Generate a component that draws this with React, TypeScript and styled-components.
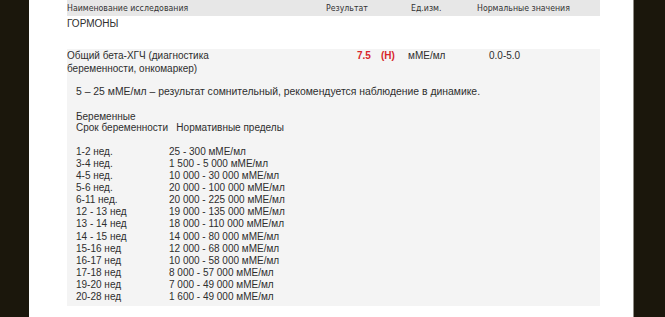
import React from "react";
import styled, { createGlobalStyle } from "styled-components";

const Global = createGlobalStyle`
  html, body { margin: 0; padding: 0; background: #1b170c; }
  #root { width: 665px; height: 317px; overflow: hidden; }
`;

const Frame = styled.div`
  display: flex;
  height: 317px;
  background: #1b170c;
`;

const SideBar = styled.div<{ $w: number }>`
  width: ${(p) => p.$w}px;
  flex: none;
  background: #1b170c;
`;

const Sheet = styled.div`
  width: 605px;
  flex: none;
  background: #ffffff;
  border-right: 1px solid #8f8c86;
  padding: 0 33px 0 38px;
  box-sizing: border-box;
  font-family: "Liberation Sans", Arial, sans-serif;
  color: #2e2e2e;
  font-size: 10px;
`;

const Cols = styled.div`
  display: grid;
  grid-template-columns: 259px 85px 66px 1fr;
  align-items: start;
`;

const HeaderRow = styled(Cols)`
  height: 16px;
  background: #e7e7e7;
  font-size: 8.7px;
  line-height: 16px;
  color: #333;
  font-family: "DejaVu Sans Condensed", "DejaVu Sans", sans-serif;
`;

const Section = styled.div`
  height: 33px;
  line-height: 13px;
  font-size: 10px;
  padding-top: 1px;
  box-sizing: border-box;
`;

const Panel = styled.div`
  background: #f4f4f4;
  height: 257px;
  padding-top: 1px;
  box-sizing: border-box;
`;

const TestRow = styled(Cols)`
  line-height: 12.5px;
`;

const Result = styled.div`
  color: #d8262b;
  font-weight: bold;
  padding-left: 31px;
  display: flex;
  gap: 10px;
`;

const Unit = styled.div`
  margin-left: -3px;
`;

const Norm = styled.div`
  padding-left: 12px;
`;

const Note = styled.div`
  padding-left: 9px;
  line-height: 11.5px;
  margin-top: 11px;
`;

const Remark = styled.div`
  font-size: 10.4px;
`;

const Para = styled.div<{ $gap: number }>`
  margin-top: ${(p) => p.$gap}px;
`;

const Table = styled.div`
  display: grid;
  grid-template-columns: 93px 1fr;
  margin-top: 12px;
`;

const Cell = styled.div`
  height: 12.17px;
`;

const rows: [string, string][] = [
  ["1-2 нед.", "25 - 300 мМЕ/мл"],
  ["3-4 нед.", "1 500 - 5 000 мМЕ/мл"],
  ["4-5 нед.", "10 000 - 30 000 мМЕ/мл"],
  ["5-6 нед.", "20 000 - 100 000 мМЕ/мл"],
  ["6-11 нед.", "20 000 - 225 000 мМЕ/мл"],
  ["12 - 13 нед", "19 000 - 135 000 мМЕ/мл"],
  ["13 - 14 нед", "18 000 - 110 000 мМЕ/мл"],
  ["14 - 15 нед", "14 000 - 80 000 мМЕ/мл"],
  ["15-16 нед", "12 000 - 68 000 мМЕ/мл"],
  ["16-17 нед", "10 000 - 58 000 мМЕ/мл"],
  ["17-18 нед", "8 000 - 57 000 мМЕ/мл"],
  ["19-20 нед", "7 000 - 49 000 мМЕ/мл"],
  ["20-28 нед", "1 600 - 49 000 мМЕ/мл"],
];

export default function App() {
  return (
    <>
      <Global />
      <Frame>
        <SideBar $w={29} />
        <Sheet>
          <HeaderRow>
            <div>Наименование исследования</div>
            <div>Результат</div>
            <div>Ед.изм.</div>
            <div>Нормальные значения</div>
          </HeaderRow>
          <Section>ГОРМОНЫ</Section>
          <Panel>
            <TestRow>
              <div>
                Общий бета-ХГЧ (диагностика
                <br />
                беременности, онкомаркер)
              </div>
              <Result>
                <span>7.5</span>
                <span>(H)</span>
              </Result>
              <Unit>мМЕ/мл</Unit>
              <Norm>0.0-5.0</Norm>
            </TestRow>
            <Note>
              <Remark>5 – 25 мМЕ/мл – результат сомнительный, рекомендуется наблюдение в динамике.</Remark>
              <Para $gap={13}>
                Беременные
                <br />
                Срок беременности&nbsp;&nbsp;&nbsp;Нормативные пределы
              </Para>
              <Table>
                {rows.map(([a, b]) => (
                  <React.Fragment key={a}>
                    <Cell>{a}</Cell>
                    <Cell>{b}</Cell>
                  </React.Fragment>
                ))}
              </Table>
            </Note>
          </Panel>
        </Sheet>
        <SideBar $w={30} />
      </Frame>
    </>
  );
}
